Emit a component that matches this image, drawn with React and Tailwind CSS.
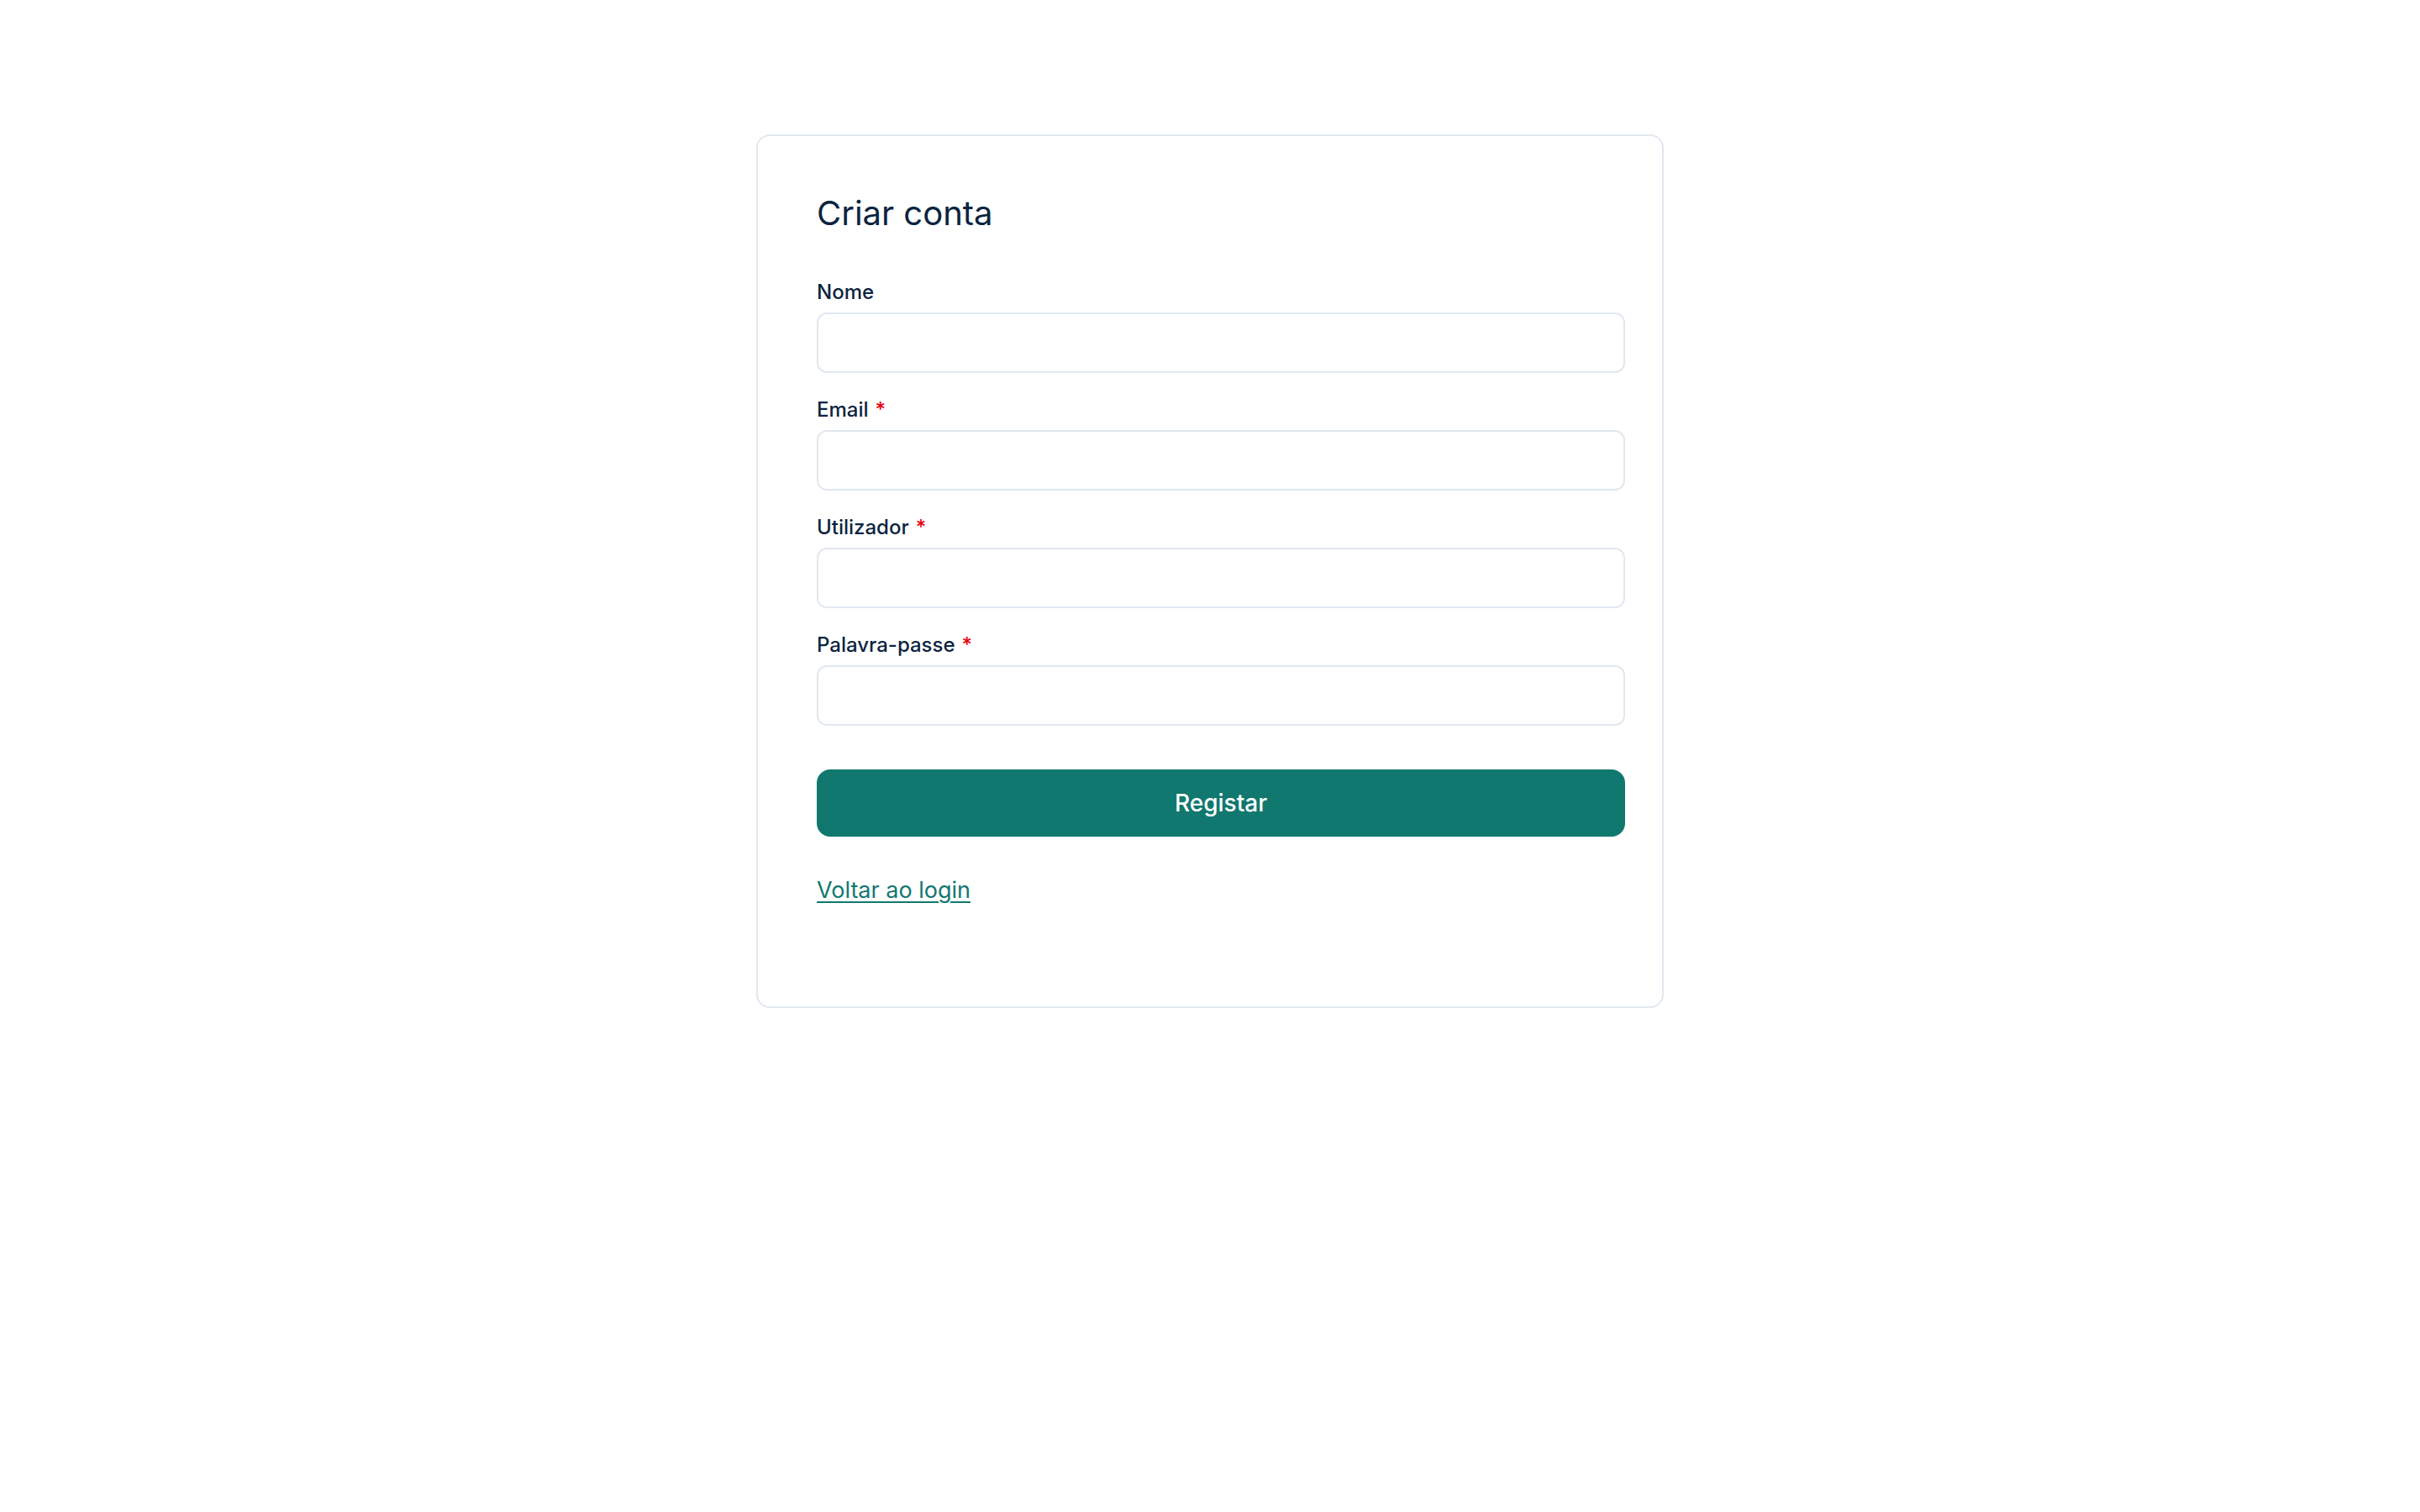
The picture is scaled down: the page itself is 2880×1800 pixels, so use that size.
import { useState } from 'react';

const fields = [
  { id: 'name', label: 'Nome', type: 'text', required: false },
  { id: 'email', label: 'Email', type: 'email', required: true },
  { id: 'username', label: 'Utilizador', type: 'text', required: true },
  { id: 'password', label: 'Palavra-passe', type: 'password', required: true },
];

export default function App() {
  const [values, setValues] = useState({ name: '', email: '', username: '', password: '' });

  function handleChange(e) {
    setValues({ ...values, [e.target.name]: e.target.value });
  }

  return (
    <div className="min-h-screen bg-white font-['Inter',sans-serif] text-[#0c2440]">
      <div className="flex justify-center pt-40">
        <form
          onSubmit={(e) => e.preventDefault()}
          className="w-[1080px] rounded-2xl border-2 border-slate-200 bg-white pb-[118px] pl-[70px] pt-16"
        >
          <h1 className="mb-[50px] text-[40px] font-normal leading-[56px]">Criar conta</h1>

          {fields.map((f) => (
            <div key={f.id} className="mb-[28px]">
              <label htmlFor={f.id} className="mb-[8px] block text-[24px] font-medium leading-8">
                {f.label}
                {f.required && <span className="ml-2 text-red-600">*</span>}
              </label>
              <input
                id={f.id}
                name={f.id}
                type={f.type}
                value={values[f.id]}
                onChange={handleChange}
                className="block h-[72px] w-[962px] rounded-xl border-2 border-slate-200 bg-white px-6 text-[28px] outline-none"
              />
            </div>
          ))}

          <button
            type="submit"
            className="mt-[52px] block h-20 w-[962px] rounded-2xl bg-[#11786f] text-[28px] font-medium text-white"
          >
            Registar
          </button>

          <a href="#" className="mt-[44px] inline-block text-[27px] leading-10 text-[#11786f] underline decoration-2 underline-offset-4">
            Voltar ao login
          </a>
        </form>
      </div>
    </div>
  );
}
